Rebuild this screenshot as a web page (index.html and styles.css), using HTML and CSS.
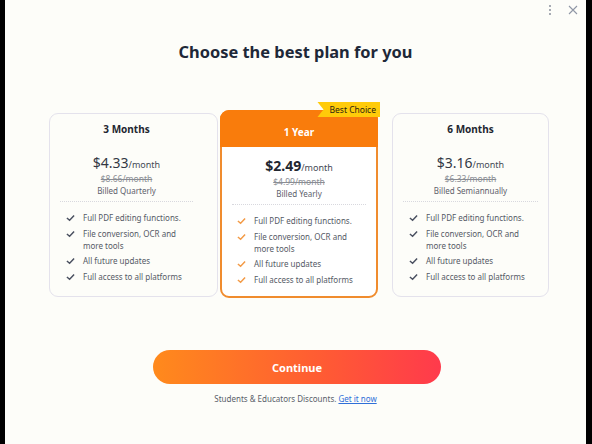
FILE: index.html
```html
<!DOCTYPE html>
<html>
<head>
<meta charset="utf-8">
<link rel="stylesheet" href="styles.css">
</head>
<body>
<div class="app">
  <div class="topbar">
    <svg class="kebab" width="4" height="12" viewBox="0 0 4 12"><circle cx="2" cy="2" r="1" fill="#8a8f9c"/><circle cx="2" cy="6" r="1" fill="#8a8f9c"/><circle cx="2" cy="10" r="1" fill="#8a8f9c"/></svg>
    <svg class="close" width="10" height="10" viewBox="0 0 10 10"><path d="M1 1L9 9M9 1L1 9" stroke="#9097a6" stroke-width="1.1" fill="none"/></svg>
  </div>
  <h1 class="title">Choose the best plan for you</h1>
  <div class="plans">
    <div class="card card-left">
      <div class="card-title">3 Months</div>
      <div class="price"><span class="amount">$4.33</span><span class="per">/month</span></div>
      <div class="strike">$8.66/month</div>
      <div class="billed">Billed Quarterly</div>
      <div class="divider"></div>
      <ul class="features">
        <li><svg class="check" viewBox="0 0 10 8"><path d="M1 4L4 6.6L9 1.2" stroke="currentColor" stroke-width="1.6" fill="none"/></svg><span>Full PDF editing functions.</span></li>
        <li><svg class="check" viewBox="0 0 10 8"><path d="M1 4L4 6.6L9 1.2" stroke="currentColor" stroke-width="1.6" fill="none"/></svg><span>File conversion, OCR and more tools</span></li>
        <li><svg class="check" viewBox="0 0 10 8"><path d="M1 4L4 6.6L9 1.2" stroke="currentColor" stroke-width="1.6" fill="none"/></svg><span>All future updates</span></li>
        <li><svg class="check" viewBox="0 0 10 8"><path d="M1 4L4 6.6L9 1.2" stroke="currentColor" stroke-width="1.6" fill="none"/></svg><span>Full access to all platforms</span></li>
      </ul>
    </div>
    <div class="card card-best">
      <div class="badge">Best Choice</div>
      <div class="best-head">1 Year</div>
      <div class="price"><span class="amount bold">$2.49</span><span class="per">/month</span></div>
      <div class="strike">$4.99/month</div>
      <div class="billed">Billed Yearly</div>
      <div class="divider"></div>
      <ul class="features">
        <li><svg class="check" viewBox="0 0 10 8"><path d="M1 4L4 6.6L9 1.2" stroke="currentColor" stroke-width="1.6" fill="none"/></svg><span>Full PDF editing functions.</span></li>
        <li><svg class="check" viewBox="0 0 10 8"><path d="M1 4L4 6.6L9 1.2" stroke="currentColor" stroke-width="1.6" fill="none"/></svg><span>File conversion, OCR and more tools</span></li>
        <li><svg class="check" viewBox="0 0 10 8"><path d="M1 4L4 6.6L9 1.2" stroke="currentColor" stroke-width="1.6" fill="none"/></svg><span>All future updates</span></li>
        <li><svg class="check" viewBox="0 0 10 8"><path d="M1 4L4 6.6L9 1.2" stroke="currentColor" stroke-width="1.6" fill="none"/></svg><span>Full access to all platforms</span></li>
      </ul>
    </div>
    <div class="card card-right">
      <div class="card-title">6 Months</div>
      <div class="price"><span class="amount">$3.16</span><span class="per">/month</span></div>
      <div class="strike">$6.33/month</div>
      <div class="billed">Billed Semiannually</div>
      <div class="divider"></div>
      <ul class="features">
        <li><svg class="check" viewBox="0 0 10 8"><path d="M1 4L4 6.6L9 1.2" stroke="currentColor" stroke-width="1.6" fill="none"/></svg><span>Full PDF editing functions.</span></li>
        <li><svg class="check" viewBox="0 0 10 8"><path d="M1 4L4 6.6L9 1.2" stroke="currentColor" stroke-width="1.6" fill="none"/></svg><span>File conversion, OCR and more tools</span></li>
        <li><svg class="check" viewBox="0 0 10 8"><path d="M1 4L4 6.6L9 1.2" stroke="currentColor" stroke-width="1.6" fill="none"/></svg><span>All future updates</span></li>
        <li><svg class="check" viewBox="0 0 10 8"><path d="M1 4L4 6.6L9 1.2" stroke="currentColor" stroke-width="1.6" fill="none"/></svg><span>Full access to all platforms</span></li>
      </ul>
    </div>
  </div>
  <button class="continue">Continue</button>
  <p class="discount">Students &amp; Educators Discounts. <a class="link" href="#">Get it now</a></p>
</div>
</body>
</html>
```

FILE: styles.css
```css
html, body {
  margin: 0;
  padding: 0;
}
body {
  background: #000;
  width: 592px;
  height: 444px;
  overflow: hidden;
  font-family: "Noto Sans", "Open Sans", sans-serif;
}
.app {
  margin: 0 6px 0 5px;
  height: 444px;
  background: #fdfdf9;
  display: flex;
  flex-direction: column;
}
.topbar {
  height: 20px;
  display: flex;
  justify-content: flex-end;
  align-items: flex-start;
  padding: 4px 8px 0 0;
  box-sizing: border-box;
  gap: 16px;
}
.kebab { margin-top: 0; }
.close { margin-top: 1px; }
.title {
  margin: 20px 0 0;
  text-align: center;
  font-size: 16.4px;
  line-height: 24px;
  font-weight: 700;
  color: #1e2838;
}
.plans {
  display: flex;
  align-items: flex-start;
  margin: 46px 0 0 44px;
}
.card {
  box-sizing: border-box;
  border-radius: 9px;
  display: flex;
  flex-direction: column;
  align-items: stretch;
  text-align: center;
  position: relative;
}
.card-left, .card-right {
  margin-top: 3px;
  height: 184px;
  border: 1px solid #e4e2ec;
  padding-top: 8px;
}
.card-left {
  width: 169px;
  padding-right: 14px;
}
.card-right {
  width: 157px;
  margin-left: 14px;
}
.card-best {
  width: 158px;
  height: 188px;
  margin-left: 2px;
  border: 2px solid #f08c2e;
  background: #ffffff;
}
.card-title {
  font-size: 10px;
  line-height: 14px;
  font-weight: 700;
  color: #222630;
}
.best-head {
  margin: -2px -2px 0;
  height: 37px;
  border-radius: 9px 9px 0 0;
  background: #f97c0c;
  color: #fff;
  font-size: 10px;
  font-weight: 700;
  line-height: 14px;
  padding-top: 15px;
  box-sizing: border-box;
}
.badge {
  position: absolute;
  top: -10px;
  right: -4px;
  height: 15px;
  padding: 0 4px 0 12px;
  background: #ffcb0a;
  color: #2b2410;
  font-size: 8.5px;
  line-height: 15px;
  clip-path: polygon(0 0, 100% 0, 100% 100%, 0 100%, 6px 50%);
  z-index: 2;
}
.price {
  margin-top: 18px;
  line-height: 16px;
  color: #333844;
}
.card-best .price {
  margin-top: 10px;
  color: #222630;
}
.amount {
  font-size: 14px;
}
.amount.bold {
  font-weight: 700;
}
.per {
  font-size: 9px;
  color: #444a55;
}
.strike {
  font-size: 8.5px;
  line-height: 12px;
  color: #8a8d94;
  text-decoration: line-through;
}
.billed {
  font-size: 8px;
  line-height: 12px;
  color: #5d616b;
}
.divider {
  margin: 4px 10px 0;
  border-top: 1px dotted #d8d8de;
}
.features {
  list-style: none;
  margin: 10px 0 0;
  padding: 0 6px 0 16px;
  display: flex;
  flex-direction: column;
  gap: 3.5px;
  text-align: left;
}
.card-best .features {
  padding-left: 15px;
}
.features li {
  display: flex;
  align-items: flex-start;
  gap: 8px;
  font-size: 8px;
  line-height: 12px;
  color: #555a66;
}
.features li span {
  max-width: 102px;
}
.check {
  flex: none;
  width: 9px;
  height: 8px;
  margin-top: 2px;
  color: #4a5060;
}
.card-best .check {
  color: #f39a45;
}
.continue {
  margin: 52px 0 0 148px;
  width: 288px;
  height: 34px;
  border: none;
  border-radius: 17px;
  background: linear-gradient(90deg, #ff8a1c 0%, #ff5a34 60%, #ff3a4c 100%);
  color: #fff;
  font-family: inherit;
  font-size: 11px;
  font-weight: 700;
  padding: 0;
}
.discount {
  margin: 9px 0 0;
  text-align: center;
  font-size: 8px;
  line-height: 12px;
  color: #5a5f6a;
}
.link {
  color: #2f6fd8;
  text-decoration: underline;
}
```
